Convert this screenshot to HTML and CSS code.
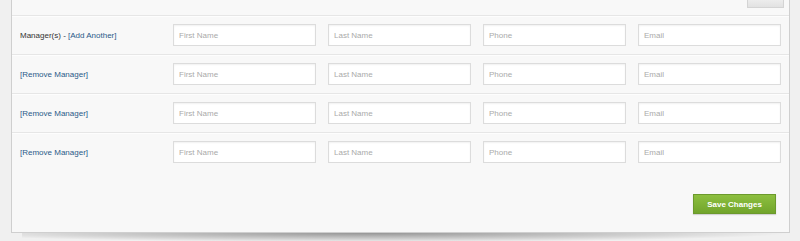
FILE: index.html
```html
<!DOCTYPE html>
<html>
<head>
<meta charset="utf-8">
<link rel="stylesheet" href="styles.css">
</head>
<body>
<div class="panel">
  <div class="top-bar"><span class="top-btn"></span></div>
  <div class="row">
    <div class="label">Manager(s) - <a class="link" href="#">[Add Another]</a></div>
    <div class="fields">
      <input class="field" placeholder="First Name">
      <input class="field" placeholder="Last Name">
      <input class="field" placeholder="Phone">
      <input class="field" placeholder="Email">
    </div>
  </div>
  <div class="row">
    <div class="label"><a class="link" href="#">[Remove Manager]</a></div>
    <div class="fields">
      <input class="field" placeholder="First Name">
      <input class="field" placeholder="Last Name">
      <input class="field" placeholder="Phone">
      <input class="field" placeholder="Email">
    </div>
  </div>
  <div class="row">
    <div class="label"><a class="link" href="#">[Remove Manager]</a></div>
    <div class="fields">
      <input class="field" placeholder="First Name">
      <input class="field" placeholder="Last Name">
      <input class="field" placeholder="Phone">
      <input class="field" placeholder="Email">
    </div>
  </div>
  <div class="row">
    <div class="label"><a class="link" href="#">[Remove Manager]</a></div>
    <div class="fields">
      <input class="field" placeholder="First Name">
      <input class="field" placeholder="Last Name">
      <input class="field" placeholder="Phone">
      <input class="field" placeholder="Email">
    </div>
  </div>
  <div class="footer">
    <button class="save">Save Changes</button>
  </div>
</div>
</body>
</html>
```
FILE: styles.css
```css
html, body {
  margin: 0;
  padding: 0;
}
body {
  background: #f0f0f0;
  font-family: "Liberation Sans", Arial, sans-serif;
  font-size: 8px;
  color: #333;
  height: 241px;
  overflow: hidden;
}
.panel {
  position: relative;
  margin-left: 11px;
  width: 777px;
  height: 232px;
  background: #f8f8f8;
  border: 1px solid #cfcfcf;
  border-top: none;
}
.panel::after {
  content: "";
  position: absolute;
  left: 10px;
  right: 0;
  top: 233px;
  height: 9px;
  background: radial-gradient(ellipse 55% 100% at 45% 0%, rgba(0,0,0,0.38), rgba(0,0,0,0.12) 70%, rgba(0,0,0,0) 100%);
}
.top-bar {
  height: 15px;
  display: flex;
  justify-content: flex-end;
}
.top-btn {
  width: 35px;
  height: 7px;
  margin-right: 5px;
  background: linear-gradient(#ececec, #e2e2e2);
  border: 1px solid #d4d4d4;
  border-top: none;
}
.row {
  display: flex;
  align-items: center;
  padding: 8px 0 8px 8px;
  border-top: 1px solid #e6e6e6;
  box-shadow: inset 0 1px 0 #fdfdfd;
}
.label {
  flex: 0 0 153px;
  white-space: nowrap;
}
.link {
  color: #2b5a88;
  text-decoration: none;
}
.fields {
  display: flex;
  gap: 12px;
}
.field {
  box-sizing: border-box;
  width: 143px;
  height: 22px;
  margin: 0;
  padding: 0 5px;
  background: #fff;
  border: 1px solid #dcdcdc;
  box-shadow: inset 0 1px 2px rgba(0,0,0,0.06);
  font-family: "Liberation Sans", Arial, sans-serif;
  font-size: 8px;
  color: #333;
  outline: none;
}
.field::placeholder {
  color: #aaa;
}
.footer {
  display: flex;
  justify-content: flex-end;
  padding: 23px 13px 0 0;
}
.save {
  width: 83px;
  height: 20px;
  margin: 0;
  padding: 0;
  border: 1px solid #6c9a2c;
  background: linear-gradient(#8dbf3f, #72a52c);
  color: #fff;
  font-family: "Liberation Sans", Arial, sans-serif;
  font-size: 8px;
  font-weight: bold;
  box-shadow: 0 1px 1px rgba(0,0,0,0.15);
}
```
